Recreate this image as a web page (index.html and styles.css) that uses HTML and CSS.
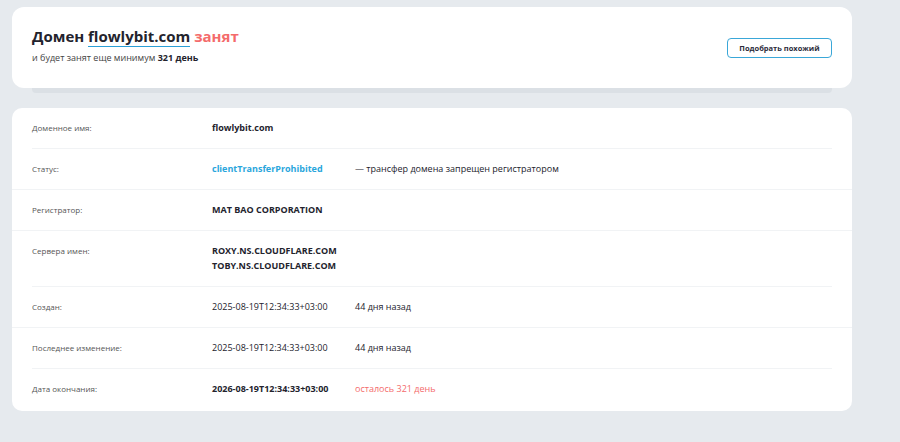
FILE: index.html
```html
<!DOCTYPE html>
<html lang="ru">

<head>
    <meta charset="UTF-8" />
    <meta name="viewport" content="width=device-width, initial-scale=1.0" />
    <title>Домен flowlybit.com занят</title>
    <link rel="stylesheet" href="styles.css">
</head>

<body>
    <div class="page">
        <section class="card summary">
            <div class="summary-text">
                <h1>Домен <span class="domain">flowlybit.com</span> <span class="taken">занят</span></h1>
                <p class="until">и будет занят еще минимум <b>321 день</b></p>
            </div>
            <button class="similar-btn">Подобрать похожий</button>
        </section>
        <div class="summary-shadow"></div>

        <section class="card details">
            <div class="row sep-inset">
                <div class="cells">
                    <span class="label">Доменное имя:</span>
                    <span class="value bold">flowlybit.com</span>
                </div>
            </div>
            <div class="row sep-full">
                <div class="cells">
                    <span class="label">Статус:</span>
                    <span class="value bold status">clientTransferProhibited</span>
                    <span class="note">— трансфер домена запрещен регистратором</span>
                </div>
            </div>
            <div class="row sep-full">
                <div class="cells">
                    <span class="label">Регистратор:</span>
                    <span class="value bold">MAT BAO CORPORATION</span>
                </div>
            </div>
            <div class="row sep-inset">
                <div class="cells">
                    <span class="label">Сервера имен:</span>
                    <span class="value bold">ROXY.NS.CLOUDFLARE.COM<br>TOBY.NS.CLOUDFLARE.COM</span>
                </div>
            </div>
            <div class="row sep-full">
                <div class="cells">
                    <span class="label">Создан:</span>
                    <span class="value">2025-08-19T12:34:33+03:00</span>
                    <span class="note">44 дня назад</span>
                </div>
            </div>
            <div class="row sep-inset">
                <div class="cells">
                    <span class="label">Последнее изменение:</span>
                    <span class="value">2025-08-19T12:34:33+03:00</span>
                    <span class="note">44 дня назад</span>
                </div>
            </div>
            <div class="row last">
                <div class="cells">
                    <span class="label">Дата окончания:</span>
                    <span class="value bold">2026-08-19T12:34:33+03:00</span>
                    <span class="note expires">осталось 321 день</span>
                </div>
            </div>
        </section>
    </div>
</body>

</html>
```

FILE: styles.css
```css
* {
    box-sizing: border-box;
    margin: 0;
    padding: 0;
}

body {
    font-family: 'Open Sans', 'Noto Sans', sans-serif;
    background: #e6eaee;
    color: #222;
}

.page {
    width: 840px;
    margin: 7px 0 0 12px;
}

.card {
    background: #fff;
    border-radius: 12px;
}

.summary {
    display: flex;
    justify-content: space-between;
    align-items: center;
    height: 81px;
    padding: 0 20px 6px;
    position: relative;
    z-index: 1;
}

.summary h1 {
    font-size: 15px;
    font-weight: 700;
    line-height: 22px;
    color: #23232d;
}

.domain {
    border-bottom: 1px solid #2a9fd6;
}

.taken {
    color: #f46b6b;
}

.until {
    margin-top: 5px;
    font-size: 9px;
    line-height: 12px;
    color: #444;
}

.until b {
    color: #23232d;
}

.similar-btn {
    width: 105px;
    height: 20px;
    margin-top: 6px;
    border: 1px solid #3aa7d8;
    border-radius: 4px;
    background: #fff;
    font-family: inherit;
    font-size: 7.5px;
    font-weight: 700;
    color: #2b2b3b;
    cursor: pointer;
}

.summary-shadow {
    height: 5px;
    margin: 0 20px;
    background: #dbe0e5;
    border-radius: 0 0 4px 4px;
}

.details {
    margin-top: 15px;
    border-radius: 10px;
}

.row {
    padding: 0 20px;
}

.row.sep-full {
    border-bottom: 1px solid #f1f3f5;
}

.row.sep-inset .cells {
    border-bottom: 1px solid #f1f3f5;
}

.row.last .cells {
    padding-bottom: 15px;
}

.cells {
    display: grid;
    grid-template-columns: 180px 143px 1fr;
    align-items: start;
    padding: 12px 0 13px;
}

.label {
    font-size: 8px;
    line-height: 15px;
    color: #555;
}

.value,
.note {
    font-size: 9px;
    line-height: 15px;
    color: #23232d;
}

.bold {
    font-weight: 700;
}

.status {
    color: #2aa6dc;
}

.expires {
    color: #f46b6b;
}
```
